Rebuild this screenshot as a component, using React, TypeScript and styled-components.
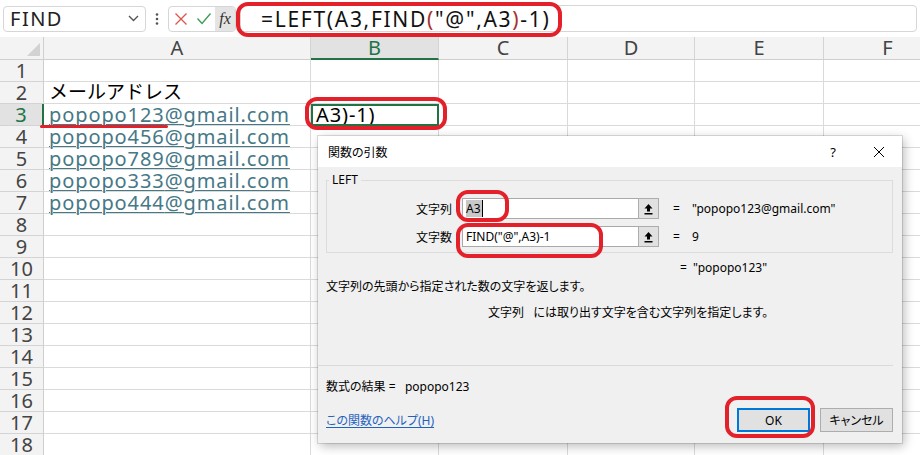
import React from 'react'
import styled, {createGlobalStyle} from 'styled-components'

const GlobalStyle = createGlobalStyle`
  html, body {
    margin: 0;
    padding: 0;
    background: #fff;
  }
  body {
    font-family: "Noto Sans", "Noto Sans CJK JP", sans-serif;
    color: #000;
  }
`

const COLUMNS = [
  {id: 'A', width: 267},
  {id: 'B', width: 128},
  {id: 'C', width: 129},
  {id: 'D', width: 127},
  {id: 'E', width: 129},
  {id: 'F', width: 128},
]

const EMAILS = ['popopo123', 'popopo456', 'popopo789', 'popopo333', 'popopo444']

const GREEN = '#217346'
const RED = '#e2212b'

const Root = styled.div`
  position: relative;
  width: 920px;
  height: 455px;
  overflow: hidden;
  background: #fff;
`

/* formula bar */
const FormulaBar = styled.div`
  display: flex;
  align-items: center;
  height: 37px;
  padding: 0 3px;
  box-sizing: border-box;
  background: #fff;
`

const NameBox = styled.div`
  display: flex;
  align-items: center;
  justify-content: space-between;
  width: 143px;
  height: 26px;
  box-sizing: border-box;
  padding: 0 6px 0 6px;
  border: 1px solid #d6d6d6;
  border-radius: 4px;
  font-size: 20px;
  letter-spacing: 1.5px;
  color: #222;
`

const Grip = styled.div`
  display: flex;
  justify-content: center;
  width: 22px;
`

const IconBox = styled.div`
  display: flex;
  align-items: center;
  width: 68px;
  height: 26px;
  box-sizing: border-box;
  border: 1px solid #d6d6d6;
  border-radius: 4px;
  overflow: hidden;
`

const IconSlot = styled.div`
  display: flex;
  align-items: center;
  justify-content: center;
  width: 23px;
  height: 100%;
`

const FxSlot = styled.div`
  display: flex;
  align-items: center;
  justify-content: center;
  flex: 1;
  height: 100%;
  background: #e4e4e4;
  font-family: "Liberation Serif", serif;
  font-style: italic;
  font-size: 16px;
  color: #333;
`

const FormulaInput = styled.div`
  display: flex;
  align-items: center;
  margin-left: 4px;
  flex: 1;
  height: 27px;
  box-sizing: border-box;
  padding-left: 20px;
  border: 1px solid #d6d6d6;
  border-radius: 4px;
  font-size: 21px;
  letter-spacing: 1.7px;
  color: #111;
`

const Paren = styled.span`
  color: #a8322f;
`

/* sheet */
const Sheet = styled.div`
  display: grid;
  grid-template-columns: 44px ${COLUMNS.map((c) => `${c.width}px`).join(' ')};
  grid-template-rows: 23px repeat(18, 22px);
`

const Corner = styled.div`
  position: relative;
  background: #f3f3f3;
  border-right: 1px solid #cfcfcf;
  border-bottom: 1px solid #cfcfcf;
  &::after {
    content: '';
    position: absolute;
    right: 3px;
    bottom: 3px;
    border-left: 13px solid transparent;
    border-bottom: 13px solid #d2d2d2;
  }
`

const ColHeader = styled.div<{$active?: boolean}>`
  display: flex;
  align-items: center;
  justify-content: center;
  box-sizing: border-box;
  background: ${(p) => (p.$active ? '#e2e2e2' : '#f3f3f3')};
  border-right: 1px solid #d4d4d4;
  border-bottom: ${(p) => (p.$active ? `2px solid ${GREEN}` : '1px solid #cfcfcf')};
  font-size: 20px;
  line-height: 22px;
  color: ${(p) => (p.$active ? GREEN : '#444')};
`

const RowHeader = styled.div<{$active?: boolean}>`
  display: flex;
  align-items: center;
  justify-content: center;
  box-sizing: border-box;
  background: ${(p) => (p.$active ? '#e2e2e2' : '#f3f3f3')};
  border-right: ${(p) => (p.$active ? `2px solid ${GREEN}` : '1px solid #cfcfcf')};
  border-bottom: 1px solid #d4d4d4;
  font-size: 20px;
  line-height: 21px;
  color: ${(p) => (p.$active ? GREEN : '#444')};
`

const Cell = styled.div<{$selected?: boolean}>`
  display: flex;
  align-items: center;
  box-sizing: border-box;
  padding-left: 5px;
  border-right: 1px solid #dadada;
  border-bottom: 1px solid #dadada;
  white-space: nowrap;
  font-size: 20px;
  letter-spacing: 0.9px;
  line-height: 21px;
  ${(p) =>
    p.$selected &&
    `
    outline: 2px solid ${GREEN};
    outline-offset: -2px;
    position: relative;
    z-index: 1;
  `}
`

const Heading = styled.span`
  font-size: 19px;
  letter-spacing: 0;
  color: #000;
`

const Link = styled.span`
  color: #467886;
  text-decoration: underline;
  text-underline-offset: 2px;
  text-decoration-thickness: 1px;
`

/* dialog */
const Dialog = styled.div`
  position: absolute;
  left: 318px;
  top: 136px;
  width: 584px;
  height: 307px;
  display: flex;
  flex-direction: column;
  background: #f0f0f0;
  box-shadow: 0 0 0 1px rgba(0, 0, 0, 0.12), 2px 3px 10px rgba(0, 0, 0, 0.28);
  font-family: "Noto Sans", "Noto Sans CJK JP", sans-serif;
  font-size: 12px;
  font-feature-settings: "palt";
  color: #000;
  z-index: 5;
`

const TitleBar = styled.div`
  display: flex;
  align-items: center;
  height: 31px;
  padding-left: 10px;
  background: #fff;
  font-size: 12px;
`

const Title = styled.div`
  flex: 1;
`

const TitleButton = styled.div`
  display: flex;
  align-items: center;
  justify-content: center;
  width: 46px;
  height: 100%;
  font-size: 13px;
`

const Body = styled.div`
  flex: 1;
  display: flex;
  flex-direction: column;
  padding: 0 9px 11px 8px;
`

const Group = styled.fieldset`
  margin: 6px 0 0 0;
  padding: 11px 0 0 0;
  height: 80px;
  box-sizing: border-box;
  border: 1px solid #dcdcdc;
  display: flex;
  flex-direction: column;
  gap: 7px;
`

const Legend = styled.legend`
  margin-left: 2px;
  padding: 0 3px;
  font-size: 12px;
  line-height: 14px;
`

const ArgRow = styled.div`
  display: flex;
  align-items: center;
  height: 21px;
`

const ArgLabel = styled.div`
  width: 135px;
  text-align: right;
  padding-right: 10px;
  box-sizing: border-box;
`

const ArgInput = styled.div`
  display: flex;
  align-items: center;
  width: 176px;
  height: 21px;
  box-sizing: border-box;
  padding-left: 3px;
  background: #fff;
  border: 1px solid #a9a9a9;
  border-right: none;
  font-size: 12px;
`

const Highlight = styled.span`
  background: #c8c8c8;
  padding-right: 1px;
  border-right: 1px solid #000;
`

const RefButton = styled.div`
  display: flex;
  align-items: center;
  justify-content: center;
  width: 21px;
  height: 21px;
  box-sizing: border-box;
  background: #e1e1e1;
  border: 1px solid #adadad;
`

const ArgValue = styled.div`
  margin-left: 14px;
  display: flex;
  gap: 12px;
`

const ResultLine = styled.div<{$indent: number}>`
  margin-top: 8px;
  padding-left: ${(p) => p.$indent}px;
  line-height: 14px;
`

const Text = styled.div<{$indent?: number; $top: number}>`
  margin-top: ${(p) => p.$top}px;
  padding-left: ${(p) => p.$indent ?? 0}px;
  line-height: 14px;
  white-space: nowrap;
`

const Separator = styled.div`
  margin: 45px 0 0 -8px;
  height: 1px;
  background: #dadada;
`

const Footer = styled.div`
  display: flex;
  flex-direction: column;
  margin-top: 14px;
`

const BottomRow = styled.div`
  display: flex;
  align-items: center;
  justify-content: space-between;
  margin-top: 14px;
`

const HelpLink = styled.span`
  color: #1f63bf;
  text-decoration: underline;
  text-underline-offset: 2px;
`

const Buttons = styled.div`
  display: flex;
  gap: 10px;
`

const Button = styled.div<{$default?: boolean}>`
  display: flex;
  align-items: center;
  justify-content: center;
  width: 73px;
  height: 24px;
  box-sizing: border-box;
  background: #e1e1e1;
  border: ${(p) => (p.$default ? '2px solid #0078d7' : '1px solid #adadad')};
  font-size: 12px;
`

/* annotations drawn on the screenshot */
const Oval = styled.div`
  position: absolute;
  box-sizing: border-box;
  border: 4px solid ${RED};
  border-radius: 12px;
  z-index: 10;
  pointer-events: none;
`

const Underline = styled.div`
  position: absolute;
  left: 40px;
  top: 125px;
  width: 128px;
  height: 3px;
  border-radius: 2px;
  background: ${RED};
  z-index: 10;
`

const Chevron = () => (
  <svg width="11" height="7" viewBox="0 0 11 7">
    <path d="M1 1l4.5 4.5L10 1" fill="none" stroke="#555" strokeWidth="1.4" />
  </svg>
)

const GripDots = () => (
  <svg width="4" height="14" viewBox="0 0 4 14">
    <circle cx="2" cy="2.5" r="1.3" fill="#555" />
    <circle cx="2" cy="7" r="1.3" fill="#555" />
    <circle cx="2" cy="11.5" r="1.3" fill="#555" />
  </svg>
)

const CancelIcon = () => (
  <svg width="14" height="14" viewBox="0 0 14 14">
    <path d="M1.5 1.5l11 11M12.5 1.5l-11 11" stroke="#d9534f" strokeWidth="1.3" />
  </svg>
)

const EnterIcon = () => (
  <svg width="16" height="13" viewBox="0 0 16 13">
    <path d="M1.5 6.5l4.5 5L14.5 1.5" fill="none" stroke="#3a9b55" strokeWidth="1.3" />
  </svg>
)

const CollapseIcon = () => (
  <svg width="11" height="12" viewBox="0 0 11 12">
    <path d="M5.5 1L1.5 5.5H4V8.5H7V5.5H9.5Z" fill="#000" />
    <rect x="1.5" y="10" width="8" height="1.5" fill="#000" />
  </svg>
)

const CloseIcon = () => (
  <svg width="12" height="12" viewBox="0 0 12 12">
    <path d="M1 1l10 10M11 1L1 11" stroke="#000" strokeWidth="1" />
  </svg>
)

export default function App() {
  const rows = Array.from({length: 18}, (_, i) => i + 1)

  const cellContent = (row: number, col: string) => {
    if (col === 'A' && row === 2) return <Heading>メールアドレス</Heading>
    if (col === 'A' && row >= 3 && row <= 7) return <Link>{EMAILS[row - 3]}@gmail.com</Link>
    if (col === 'B' && row === 3) return <span>A3)-1)</span>
    return null
  }

  return (
    <Root>
      <GlobalStyle />
      <FormulaBar>
        <NameBox>
          <span>FIND</span>
          <Chevron />
        </NameBox>
        <Grip>
          <GripDots />
        </Grip>
        <IconBox>
          <IconSlot>
            <CancelIcon />
          </IconSlot>
          <IconSlot>
            <EnterIcon />
          </IconSlot>
          <FxSlot>fx</FxSlot>
        </IconBox>
        <FormulaInput>
          =LEFT(A3,FIND<Paren>(</Paren>"@",A3<Paren>)</Paren>-1)
        </FormulaInput>
      </FormulaBar>

      <Sheet>
        <Corner />
        {COLUMNS.map((c) => (
          <ColHeader key={c.id} $active={c.id === 'B'}>
            {c.id}
          </ColHeader>
        ))}
        {rows.map((r) => (
          <React.Fragment key={r}>
            <RowHeader $active={r === 3}>{r}</RowHeader>
            {COLUMNS.map((c) => (
              <Cell key={c.id} $selected={r === 3 && c.id === 'B'}>
                {cellContent(r, c.id)}
              </Cell>
            ))}
          </React.Fragment>
        ))}
      </Sheet>

      <Dialog>
        <TitleBar>
          <Title>関数の引数</Title>
          <TitleButton>?</TitleButton>
          <TitleButton>
            <CloseIcon />
          </TitleButton>
        </TitleBar>
        <Body>
          <Group>
            <Legend>LEFT</Legend>
            <ArgRow>
              <ArgLabel>文字列</ArgLabel>
              <ArgInput>
                <Highlight>A3</Highlight>
              </ArgInput>
              <RefButton>
                <CollapseIcon />
              </RefButton>
              <ArgValue>
                <span>=</span>
                <span>"popopo123@gmail.com"</span>
              </ArgValue>
            </ArgRow>
            <ArgRow>
              <ArgLabel>文字数</ArgLabel>
              <ArgInput>FIND("@",A3)-1</ArgInput>
              <RefButton>
                <CollapseIcon />
              </RefButton>
              <ArgValue>
                <span>=</span>
                <span>9</span>
              </ArgValue>
            </ArgRow>
          </Group>
          <ResultLine $indent={354}>=&nbsp;&nbsp;"popopo123"</ResultLine>
          <Text $top={5}>文字列の先頭から指定された数の文字を返します。</Text>
          <Text $top={12} $indent={162}>
            文字列&nbsp;&nbsp;&nbsp;には取り出す文字を含む文字列を指定します。
          </Text>
          <Separator />
          <Footer>
            <Text $top={0}>数式の結果 =&nbsp;&nbsp;&nbsp;popopo123</Text>
            <BottomRow>
              <HelpLink>この関数のヘルプ(H)</HelpLink>
              <Buttons>
                <Button $default>OK</Button>
                <Button>キャンセル</Button>
              </Buttons>
            </BottomRow>
          </Footer>
        </Body>
      </Dialog>

      <Oval style={{left: 236, top: 2, width: 326, height: 35}} />
      <Oval style={{left: 305, top: 97, width: 142, height: 33}} />
      <Oval style={{left: 456, top: 190, width: 53, height: 32}} />
      <Oval style={{left: 456, top: 223, width: 147, height: 35}} />
      <Oval style={{left: 725, top: 396, width: 90, height: 42}} />
      <Underline />
    </Root>
  )
}
